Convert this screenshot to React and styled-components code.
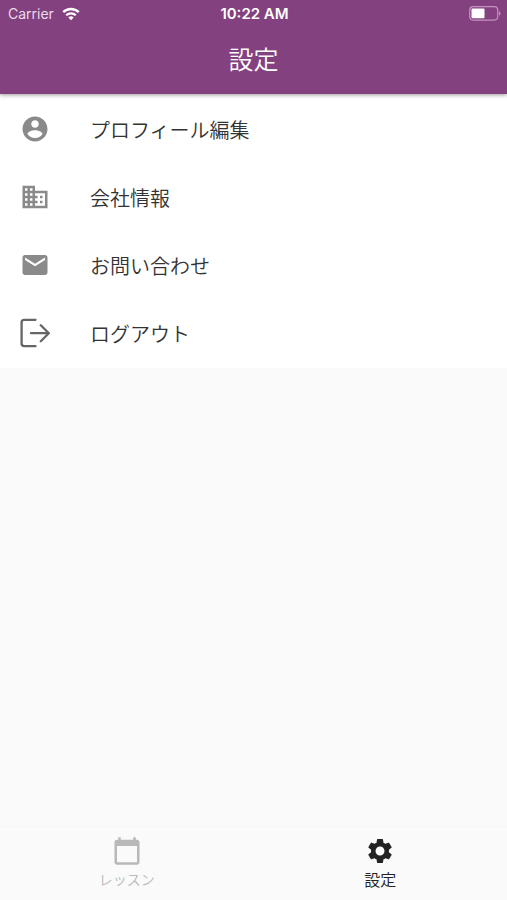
import styled, { createGlobalStyle } from "styled-components";
import {
  MdBusiness,
  MdCalendarToday,
  MdEmail,
  MdSettings,
} from "react-icons/md";

const GlobalStyle = createGlobalStyle`
  * {
    box-sizing: border-box;
  }
  body {
    margin: 0;
    background: #fafafa;
    font-family: Inter, "Noto Sans CJK JP", sans-serif;
  }
`;

const Container = styled.div`
  display: flex;
  flex-direction: column;
  min-height: 100vh;
`;

const Header = styled.header`
  position: relative;
  background: #84417f;
  color: #fff;
  box-shadow: 0 1px 4px rgba(0, 0, 0, 0.4);
`;

const StatusBar = styled.div`
  display: grid;
  grid-template-columns: 1fr auto 1fr;
  align-items: center;
  height: 27px;
  padding: 0 6px 0 8px;
  font-size: 14px;
`;

const Carrier = styled.div`
  display: flex;
  align-items: center;
  gap: 8px;
  color: #eadbe9;
`;

const Time = styled.time`
  font-size: 15px;
  font-weight: 600;
`;

const Battery = styled.svg`
  justify-self: end;
`;

const Title = styled.h1`
  margin: 0;
  height: 67px;
  font-size: 25px;
  font-weight: 350;
  line-height: 67px;
  text-align: center;
`;

const Menu = styled.ul`
  margin: 0;
  padding: 1px 0;
  list-style: none;
  background: #fff;
`;

const MenuLink = styled.a`
  display: flex;
  align-items: center;
  gap: 40px;
  height: 68px;
  padding: 0 20px;
  font-size: 20px;
  font-weight: 350;
  color: #333;
  text-decoration: none;
  svg {
    flex: none;
    color: ${(props) => (props.$dark ? "#666" : "#8a8a8a")};
  }
`;

const TabBar = styled.nav`
  display: flex;
  height: 74px;
  margin-top: auto;
  border-top: 1px solid #f6f6f6;
`;

const Tab = styled.a`
  flex: 1;
  display: flex;
  flex-direction: column;
  align-items: center;
  padding-top: 9px;
  font-size: ${(props) => (props.$active ? "16px" : "14px")};
  font-weight: 350;
  line-height: 28px;
  color: ${(props) => (props.$active ? "#222" : "#b8b8b8")};
  text-decoration: none;
`;

const WifiIcon = () => (
  <svg width="18" height="14" viewBox="0 0 18 14" fill="none" aria-hidden="true">
    <path d="M1.2 5.2a11.2 11.2 0 0 1 15.6 0" stroke="#fff" strokeWidth="2.4" />
    <path d="M4.2 8.3a6.9 6.9 0 0 1 9.6 0" stroke="#fff" strokeWidth="2.2" />
    <path d="M9 13.2 6.3 10.5a3.9 3.9 0 0 1 5.4 0z" fill="#fff" />
  </svg>
);

const BatteryIcon = () => (
  <Battery width="32" height="15" viewBox="0 0 32 15" fill="none" aria-hidden="true">
    <rect x="0.7" y="0.7" width="28" height="13.4" rx="3.5" stroke="#c193bd" strokeWidth="1.2" />
    <rect x="2.5" y="2.5" width="13" height="9.8" rx="1" fill="#fff" />
    <path d="M30 5.2c2 .7 2 3.7 0 4.4z" fill="#c193bd" />
  </Battery>
);

const ProfileIcon = ({ size }) => (
  <svg width={size} height={size} viewBox="0 0 24 24" fill="currentColor" aria-hidden="true">
    <path d="M12 2C6.48 2 2 6.48 2 12s4.48 10 10 10 10-4.48 10-10S17.52 2 12 2zm0 3c1.66 0 3 1.34 3 3s-1.34 3-3 3-3-1.34-3-3 1.34-3 3-3zm0 14.2c-2.5 0-4.71-1.28-6-3.22.03-1.99 4-3.08 6-3.08 1.99 0 5.97 1.09 6 3.08-1.29 1.94-3.5 3.22-6 3.22z" />
  </svg>
);

const LogoutIcon = ({ size }) => (
  <svg
    width={size}
    height={size}
    viewBox="0 0 30 30"
    fill="none"
    stroke="currentColor"
    strokeWidth="2.3"
    strokeLinecap="round"
    strokeLinejoin="round"
    aria-hidden="true"
  >
    <path d="M15.5 1.8H4.2a2.6 2.6 0 0 0-2.6 2.6v21.2a2.6 2.6 0 0 0 2.6 2.6h11.3" />
    <path d="M11 15.2h17.8M20.8 7.2l8 8-8 8" />
  </svg>
);

const items = [
  { label: "プロフィール編集", icon: ProfileIcon },
  { label: "会社情報", icon: MdBusiness },
  { label: "お問い合わせ", icon: MdEmail },
  { label: "ログアウト", icon: LogoutIcon, dark: true },
];

function App() {
  return (
    <Container>
      <GlobalStyle />
      <Header>
        <StatusBar>
          <Carrier>
            Carrier
            <WifiIcon />
          </Carrier>
          <Time>10:22 AM</Time>
          <BatteryIcon />
        </StatusBar>
        <Title>設定</Title>
      </Header>
      <Menu>
        {items.map(({ label, icon: ItemIcon, dark }) => (
          <li key={label}>
            <MenuLink href="#" $dark={dark}>
              <ItemIcon size={30} />
              {label}
            </MenuLink>
          </li>
        ))}
      </Menu>
      <TabBar>
        <Tab href="#">
          <MdCalendarToday size={30} />
          レッスン
        </Tab>
        <Tab href="#" $active>
          <MdSettings size={30} />
          設定
        </Tab>
      </TabBar>
    </Container>
  );
}

export default App;
